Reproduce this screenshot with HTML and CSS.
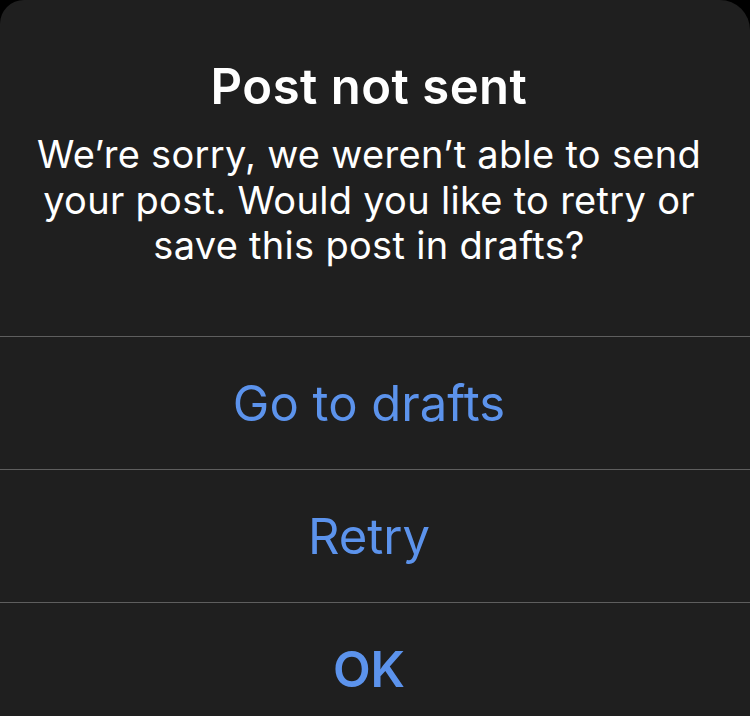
FILE: index.html
```html
<!DOCTYPE html>
<html lang="en">
<head>
<meta charset="utf-8">
<title>Post not sent</title>
<link rel="stylesheet" href="styles.css">
</head>
<body>
<div class="alert">
  <div class="alert-header">
    <h1 class="alert-title">Post not sent</h1>
    <p class="alert-message">We’re sorry, we weren’t able to send your post. Would you like to retry or save this post in drafts?</p>
  </div>
  <div class="alert-actions">
    <button class="alert-action">Go to drafts</button>
    <button class="alert-action">Retry</button>
    <button class="alert-action alert-action-bold">OK</button>
  </div>
</div>
</body>
</html>
```
FILE: styles.css
```css
html, body {
  margin: 0;
  padding: 0;
  background: #000;
  height: 716px;
  overflow: hidden;
}

.alert {
  background: #1f1f1f;
  border-radius: 24px 30px 0 0;
  height: 716px;
  overflow: hidden;
  font-family: Inter, "Noto Sans", "Liberation Sans", sans-serif;
  color: #fff;
  display: flex;
  flex-direction: column;
}

.alert-header {
  flex: none;
  height: 336px;
  box-sizing: border-box;
  padding: 59px 36px 0 24px;
  text-align: center;
}

.alert-title {
  margin: 0;
  font-size: 49px;
  line-height: 56px;
  font-weight: 600;
  letter-spacing: 0.5px;
}

.alert-message {
  margin: 17px 0 0;
  font-size: 38px;
  line-height: 45.5px;
  font-weight: 400;
  letter-spacing: 0.3px;
}

.alert-actions {
  flex: none;
  display: flex;
  flex-direction: column;
}

.alert-action {
  box-sizing: border-box;
  height: 133px;
  flex: none;
  border: 0;
  border-top: 1px solid #5e5e5e;
  background: transparent;
  color: #5c93ec;
  font-family: inherit;
  font-size: 49px;
  font-weight: 400;
  letter-spacing: 0;
  padding: 0 12px 0 0;
  margin: 0;
  width: 100%;
}

.alert-action-bold {
  font-weight: 600;
}
```
